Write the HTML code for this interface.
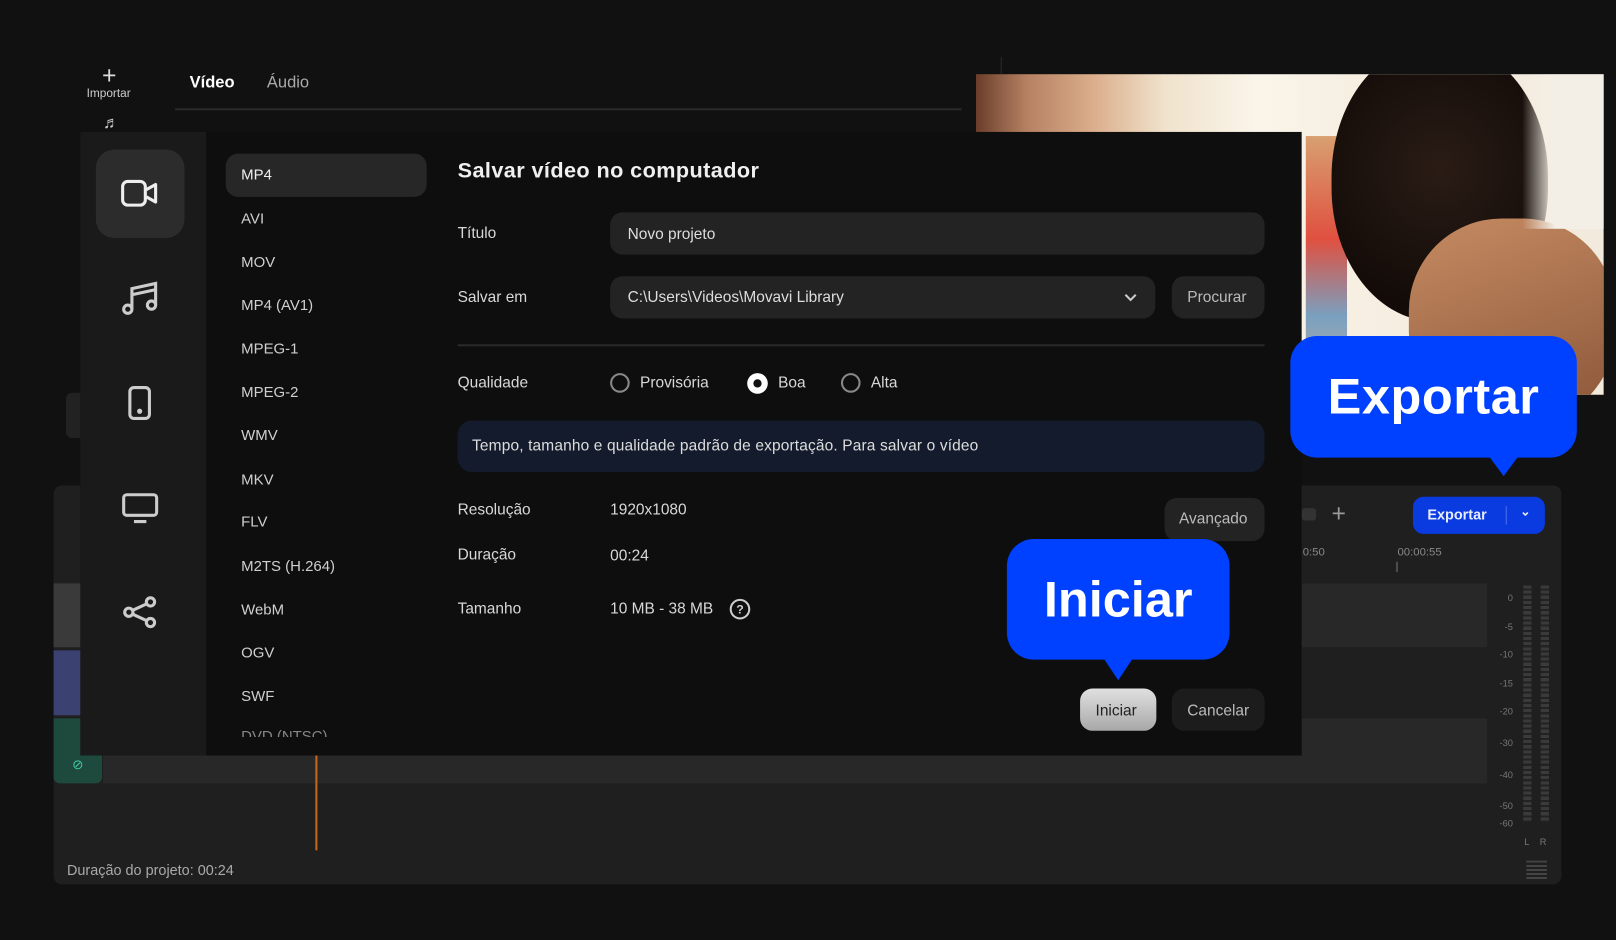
<!DOCTYPE html>
<html><head><meta charset="utf-8"><style>
*{margin:0;padding:0;box-sizing:border-box}
html,body{width:1616px;height:940px;overflow:hidden;background:#111}
#w{position:absolute;left:0;top:0;width:1568px;height:912px;transform:scale(1.03061,1.03070);transform-origin:0 0;font-family:"Liberation Sans",sans-serif;color:#ddd}
.a{position:absolute}
.t{font-size:15px;color:#d8d8d8;white-space:nowrap}
.fmt{position:absolute;left:234px;font-size:14.5px;color:#cfcfcf}
.pill{position:absolute;background:#232323;border-radius:12px}
.bub{position:absolute;background:#0040ff;border-radius:26px;color:#fff;font-weight:bold;display:flex;align-items:center;justify-content:center}
</style></head><body><div id="w">
<!-- top tabs -->
<div class="a" style="left:99px;top:62px;font-size:24px;color:#ddd;line-height:24px">+</div>
<div class="a" style="left:84px;top:85px;font-size:11.5px;color:#ccc">Importar</div>
<div class="a" style="left:100px;top:111px;font-size:16px;color:#ccc">♬</div>
<div class="a" style="left:184px;top:72px;font-size:16px;font-weight:bold;color:#fff">Vídeo</div>
<div class="a" style="left:259px;top:72px;font-size:16px;color:#aaa">Áudio</div>
<div class="a" style="left:170px;top:105px;width:763px;height:2px;background:#2a2a2a"></div>
<div class="a" style="left:971px;top:55px;width:1px;height:17px;background:#2a2a2a"></div>
<div class="a" style="left:64px;top:381px;width:20px;height:44px;background:#222;border-radius:6px"></div>
<!-- photo -->
<div class="a" style="left:947px;top:72px;width:609px;height:311px;overflow:hidden;background:linear-gradient(90deg,#6a3e2a 0%,#b58062 8%,#d9ab88 18%,#f0e2cc 30%,#faf5ea 45%,#f6efe2 60%,#f2eadc 100%)">
 <div class="a" style="left:320px;top:60px;width:40px;height:250px;background:linear-gradient(#d8a070,#e05040 40%,#7aa0c0 70%,#c8b0a0)"></div>
 <div class="a" style="left:345px;top:-30px;width:210px;height:270px;border-radius:48%;background:radial-gradient(circle at 50% 45%,#2a1c15,#120b08 75%)"></div>
 <div class="a" style="left:420px;top:140px;width:200px;height:200px;border-radius:45%;background:linear-gradient(160deg,#c58b62,#8a5538)"></div>
 <div class="a" style="left:530px;top:0;width:80px;height:150px;background:linear-gradient(90deg,transparent,#f4efe6 40%)"></div>
</div>
<!-- bottom editor -->
<div class="a" style="left:52px;top:471px;width:1463px;height:387px;background:#1f1f1f;border-radius:8px"></div>
<div class="a" style="left:52px;top:566px;width:47px;height:62px;background:#3a3a3a"></div>
<div class="a" style="left:52px;top:631px;width:47px;height:63px;background:#3b4170"></div>
<div class="a" style="left:52px;top:697px;width:47px;height:63px;background:#1e4a3e;border-radius:0 0 6px 6px"></div>
<div class="a" style="left:70px;top:734px;font-size:13px;color:#3fc9a0">⊘</div>
<div class="a" style="left:100px;top:566px;width:1343px;height:62px;background:#282828"></div>
<div class="a" style="left:100px;top:697px;width:1343px;height:63px;background:#282828"></div>
<div class="a" style="left:306px;top:733px;width:2px;height:92px;background:#c8651e"></div>
<div class="a" style="left:65px;top:836px;font-size:14px;color:#aaa">Duração do projeto: 00:24</div>
<div class="a" style="left:1264px;top:530px;font-size:11px;color:#888">0:50</div>
<div class="a" style="left:1356px;top:530px;font-size:11px;color:#888">00:00:55</div>
<div class="a" style="left:1355px;top:545px;width:1px;height:10px;background:#777"></div>
<div class="a" style="left:1263px;top:493px;width:14px;height:12px;background:#333;border-radius:3px"></div>
<div class="a" style="left:1292px;top:485px;font-size:24px;color:#999">+</div>
<div class="a" style="left:1371px;top:482px;width:128px;height:36px;background:#0a3be0;border-radius:10px;font-size:14px;font-weight:bold;color:#e8ecff;padding:9px 0 0 14px">Exportar<span style="position:absolute;left:90px;top:9px;width:1px;height:18px;background:#4d6fef"></span><span style="position:absolute;left:104px;top:7px;font-size:12px">⌄</span></div>
<!-- meter -->
<div class="a" style="left:1478px;top:568px;width:8px;height:230px;background:repeating-linear-gradient(#3a3a3a 0 3px,#222 3px 5px)"></div>
<div class="a" style="left:1495px;top:568px;width:8px;height:230px;background:repeating-linear-gradient(#3a3a3a 0 3px,#222 3px 5px)"></div>
<div class="a" style="left:1448px;top:575px;font-size:9px;color:#777;text-align:right;width:20px">0</div>
<div class="a" style="left:1448px;top:603px;font-size:9px;color:#777;text-align:right;width:20px">-5</div>
<div class="a" style="left:1448px;top:630px;font-size:9px;color:#777;text-align:right;width:20px">-10</div>
<div class="a" style="left:1448px;top:658px;font-size:9px;color:#777;text-align:right;width:20px">-15</div>
<div class="a" style="left:1448px;top:685px;font-size:9px;color:#777;text-align:right;width:20px">-20</div>
<div class="a" style="left:1448px;top:716px;font-size:9px;color:#777;text-align:right;width:20px">-30</div>
<div class="a" style="left:1448px;top:747px;font-size:9px;color:#777;text-align:right;width:20px">-40</div>
<div class="a" style="left:1448px;top:777px;font-size:9px;color:#777;text-align:right;width:20px">-50</div>
<div class="a" style="left:1448px;top:794px;font-size:9px;color:#777;text-align:right;width:20px">-60</div>
<div class="a" style="left:1479px;top:812px;font-size:9px;color:#777">L&nbsp;&nbsp;&nbsp;&nbsp;R</div>
<div class="a" style="left:1481px;top:835px;width:20px;height:18px;background:repeating-linear-gradient(#444 0 2px,transparent 2px 4px)"></div>
<!-- dialog -->
<div class="a" style="left:78px;top:128px;width:1185px;height:605px;background:#0e0e0e"></div>
<div class="a" style="left:78px;top:128px;width:122px;height:605px;background:#1a1a1a"></div>
<div class="a" style="left:93px;top:145px;width:86px;height:86px;background:#2c2c2c;border-radius:18px"></div>
<svg class="a" style="left:115px;top:170px" width="42" height="36" viewBox="0 0 42 36" fill="none" stroke="#eee" stroke-width="3" stroke-linejoin="round"><rect x="4" y="6" width="22" height="23" rx="5"/><path d="M27 14l9-5v17l-9-5"/></svg>
<svg class="a" style="left:117px;top:272px" width="38" height="36" viewBox="0 0 38 36" fill="none" stroke="#ccc" stroke-width="3"><circle cx="7" cy="28" r="4"/><circle cx="30" cy="24" r="4"/><path d="M11 28V8l23-5v21M11 14l23-5"/></svg>
<svg class="a" style="left:123px;top:373px" width="26" height="36" viewBox="0 0 26 36" fill="none" stroke="#ccc" stroke-width="3"><rect x="3" y="3" width="19" height="30" rx="4"/><circle cx="12.5" cy="26" r="1" fill="#ccc"/></svg>
<svg class="a" style="left:116px;top:476px" width="40" height="34" viewBox="0 0 40 34" fill="none" stroke="#ccc" stroke-width="3"><rect x="4" y="4" width="32" height="20" rx="3"/><path d="M14 30h12"/></svg>
<svg class="a" style="left:117px;top:575px" width="38" height="38" viewBox="0 0 38 38" fill="none" stroke="#ccc" stroke-width="3"><circle cx="29" cy="9" r="4"/><circle cx="8" cy="19" r="4"/><circle cx="29" cy="29" r="4"/><path d="M12 17l13-6M12 21l13 6"/></svg>
<div class="a" style="left:219px;top:149px;width:195px;height:42px;background:#272727;border-radius:12px"></div>
<div class="fmt" style="top:162px;color:#eee">MP4</div>
<div class="fmt" style="top:205px">AVI</div>
<div class="fmt" style="top:247px">MOV</div>
<div class="fmt" style="top:289px">MP4 (AV1)</div>
<div class="fmt" style="top:331px">MPEG-1</div>
<div class="fmt" style="top:373px">MPEG-2</div>
<div class="fmt" style="top:415px">WMV</div>
<div class="fmt" style="top:458px">MKV</div>
<div class="fmt" style="top:499px">FLV</div>
<div class="fmt" style="top:542px">M2TS (H.264)</div>
<div class="fmt" style="top:584px">WebM</div>
<div class="fmt" style="top:626px">OGV</div>
<div class="fmt" style="top:668px">SWF</div>
<div class="a" style="left:234px;top:708px;width:90px;height:7px;overflow:hidden;font-size:14.5px;color:#888"><div style="margin-top:-1px">DVD (NTSC)</div></div>
<div class="a" style="left:444px;top:154px;font-size:21px;font-weight:bold;color:#f0f0f0;letter-spacing:0.4px">Salvar vídeo no computador</div>
<div class="a t" style="left:444px;top:218px">Título</div>
<div class="pill" style="left:592px;top:206px;width:635px;height:41px"></div>
<div class="a t" style="left:609px;top:219px;color:#ddd">Novo projeto</div>
<div class="a t" style="left:444px;top:280px">Salvar em</div>
<div class="pill" style="left:592px;top:268px;width:529px;height:41px"></div>
<div class="a t" style="left:609px;top:280px;color:#ddd">C:\Users\Videos\Movavi Library</div>
<svg class="a" style="left:1091px;top:284px" width="12" height="10"><path d="M1 2l5 5 5-5" fill="none" stroke="#ccc" stroke-width="2"/></svg>
<div class="pill" style="left:1137px;top:268px;width:90px;height:41px"></div>
<div class="a t" style="left:1152px;top:280px;color:#bbb">Procurar</div>
<div class="a" style="left:444px;top:334px;width:783px;height:2px;background:#2a2a2a"></div>
<div class="a t" style="left:444px;top:363px">Qualidade</div>
<div class="a" style="left:592px;top:362px;width:19px;height:19px;border:2px solid #888;border-radius:50%"></div>
<div class="a t" style="left:621px;top:363px">Provisória</div>
<div class="a" style="left:725px;top:362px;width:20px;height:20px;background:#fff;border-radius:50%"><div style="margin:6px;width:8px;height:8px;background:#111;border-radius:50%"></div></div>
<div class="a t" style="left:755px;top:363px">Boa</div>
<div class="a" style="left:816px;top:362px;width:19px;height:19px;border:2px solid #888;border-radius:50%"></div>
<div class="a t" style="left:845px;top:363px">Alta</div>
<div class="a" style="left:444px;top:408px;width:783px;height:50px;background:#141b2c;border-radius:14px"></div>
<div class="a" style="left:458px;top:424px;font-size:15px;color:#ddd;letter-spacing:0.15px">Tempo, tamanho e qualidade padrão de exportação. Para salvar o vídeo</div>
<div class="a t" style="left:444px;top:486px">Resolução</div>
<div class="a t" style="left:592px;top:486px">1920x1080</div>
<div class="a t" style="left:444px;top:530px">Duração</div>
<div class="a t" style="left:592px;top:531px">00:24</div>
<div class="a t" style="left:444px;top:582px">Tamanho</div>
<div class="a t" style="left:592px;top:582px">10 MB - 38 MB</div>
<div class="a" style="left:708px;top:581px;width:20px;height:20px;border:2px solid #ccc;border-radius:50%;font-size:12px;font-weight:bold;text-align:center;line-height:16px;color:#ccc">?</div>
<div class="pill" style="left:1130px;top:483px;width:97px;height:42px"></div>
<div class="a t" style="left:1144px;top:495px;color:#bbb">Avançado</div>
<div class="a" style="left:1048px;top:668px;width:74px;height:41px;border-radius:12px;background:linear-gradient(#e0e0e0,#a8a8a8)"></div>
<div class="a t" style="left:1063px;top:681px;color:#222">Iniciar</div>
<div class="pill" style="left:1137px;top:668px;width:90px;height:41px;background:#1c1c1c"></div>
<div class="a t" style="left:1152px;top:681px;color:#bbb">Cancelar</div>
<!-- bubbles -->
<div class="bub" style="left:977px;top:523px;width:216px;height:117px;font-size:49px">Iniciar</div>
<div class="a" style="left:1071px;top:639px;width:0;height:0;border-left:14px solid transparent;border-right:14px solid transparent;border-top:21px solid #0040ff"></div>
<div class="bub" style="left:1252px;top:326px;width:278px;height:118px;font-size:49px;letter-spacing:0.5px">Exportar</div>
<div class="a" style="left:1445px;top:443px;width:0;height:0;border-left:14px solid transparent;border-right:14px solid transparent;border-top:19px solid #0040ff"></div>
</div></body></html>
